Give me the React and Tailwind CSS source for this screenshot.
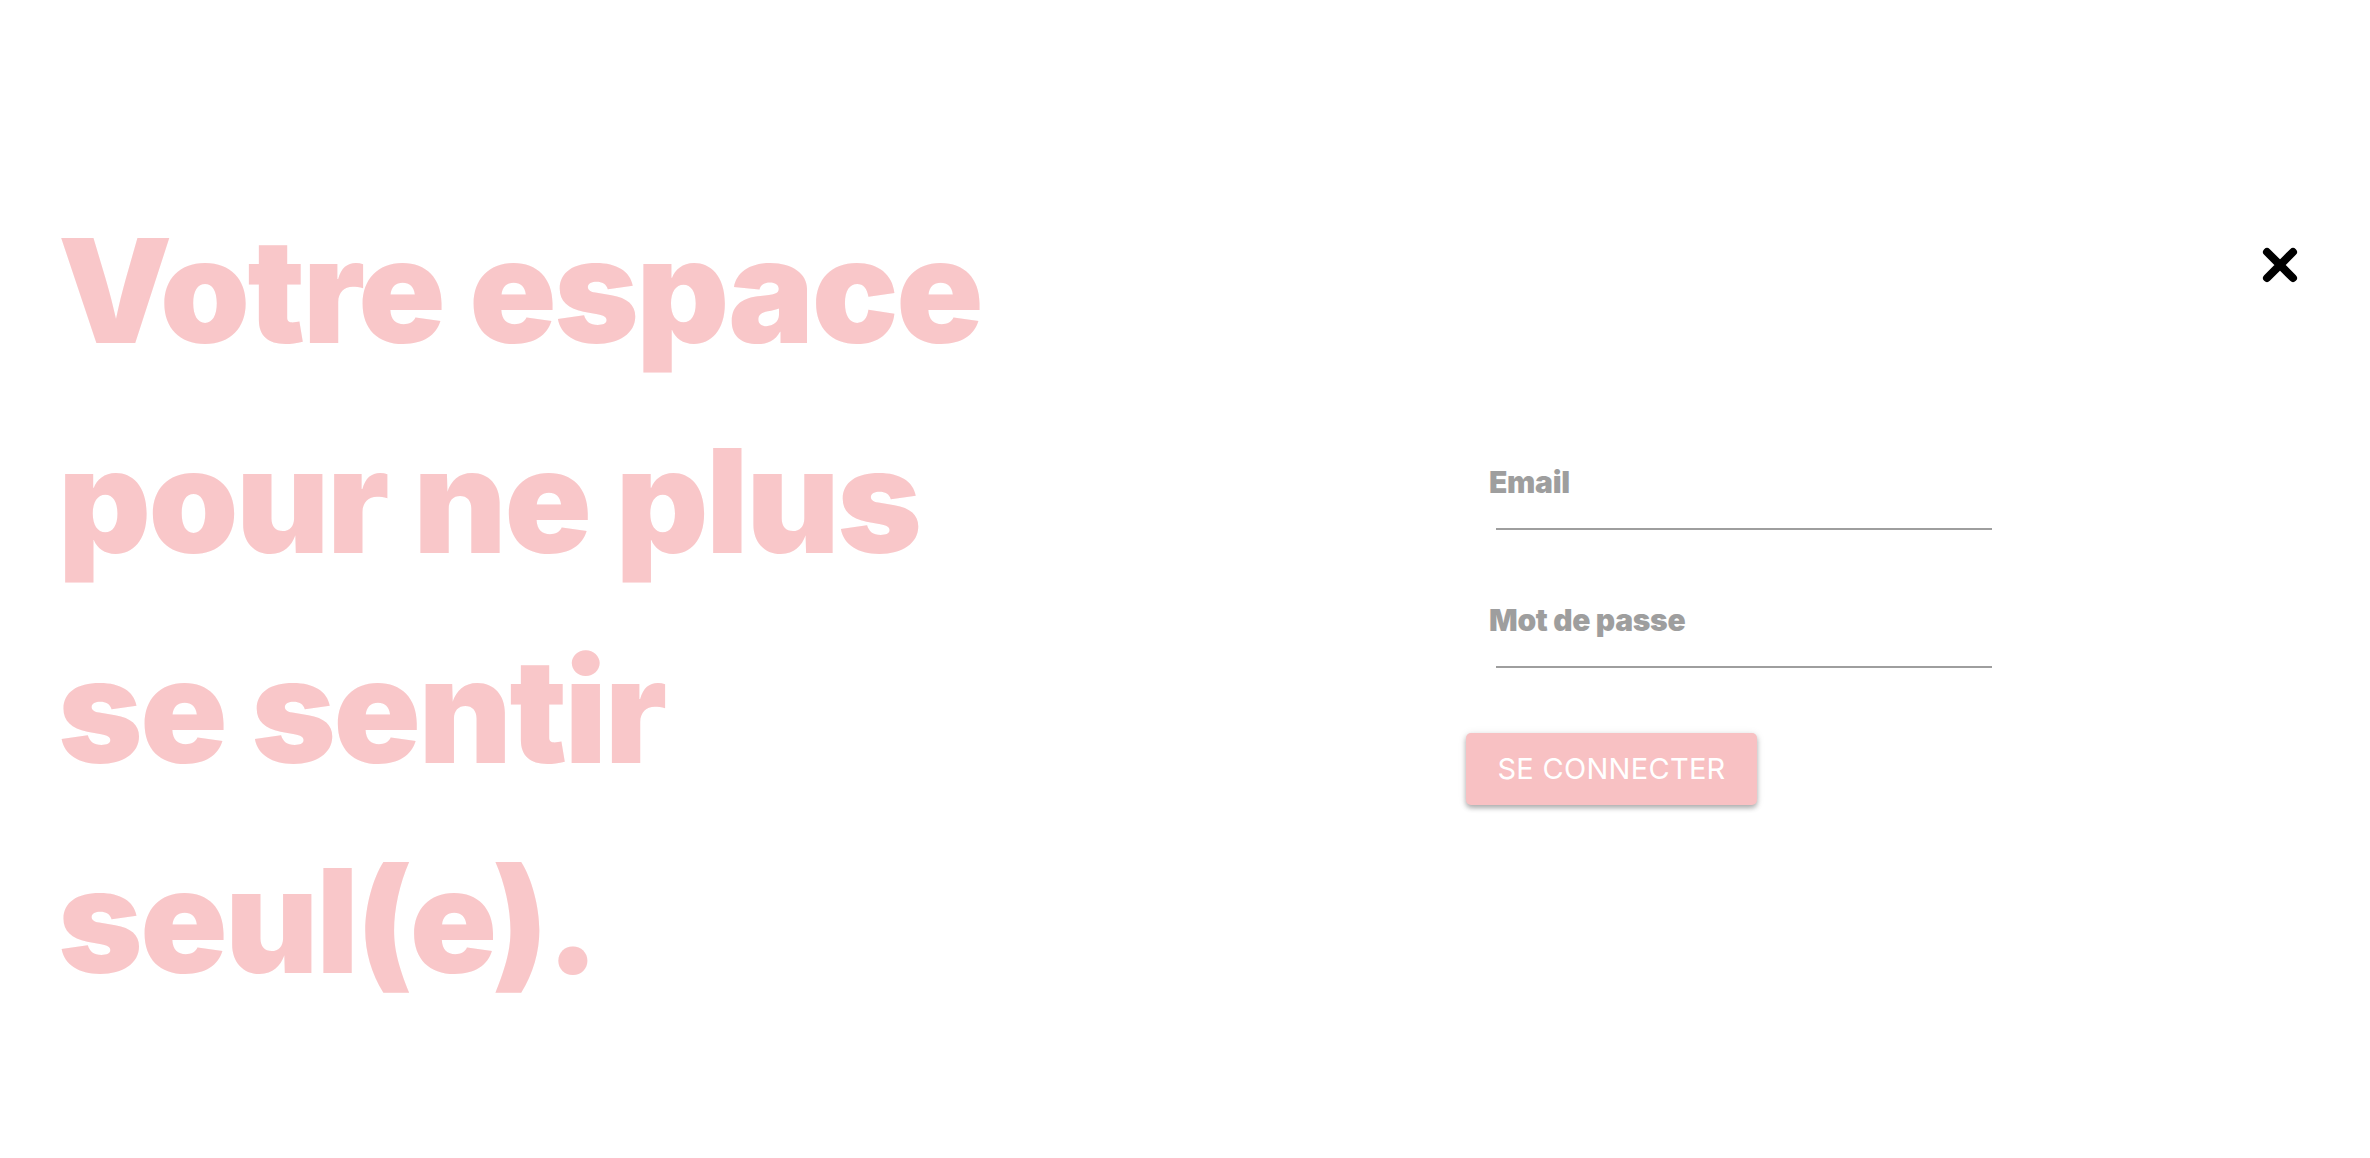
import React from "react";

function CloseIcon() {
  return (
    <svg width="36" height="36" viewBox="0 0 36 36" aria-hidden="true">
      <path d="M5 5 L31 31 M31 5 L5 31" stroke="#000" strokeWidth="8" strokeLinecap="round" fill="none" />
    </svg>
  );
}

function Field({ label, type }) {
  return (
    <div className="flex flex-col">
      <label className="text-[30px] leading-[36px] font-black text-[#9e9e9e] tracking-[-0.01em]">{label}</label>
      <input
        type={type}
        aria-label={label}
        className="mt-[28px] ml-[7px] w-[496px] h-[2px] bg-[#9e9e9e] outline-none border-0 p-0"
      />
    </div>
  );
}

export default function App() {
  return (
    <div className="relative min-h-[1158px] w-full bg-white" style={{ fontFamily: "Inter, 'Noto Sans', sans-serif" }}>
      <button className="absolute top-[247px] right-[72px] w-[36px] h-[36px] flex items-center justify-center" aria-label="Fermer">
        <CloseIcon />
      </button>
      <div className="flex items-start pl-[58px] pt-[186px]">
        <h1 className="w-[1408px] shrink-0 text-[144px] leading-[210px] font-black text-[#f9c7c9] tracking-[-0.017em]">
          Votre espace<br />pour ne plus<br />se sentir<br />seul(e).
        </h1>
        <form className="flex flex-col pt-[278px]">
          <div className="pl-[23px] flex flex-col gap-[72px]">
            <Field label="Email" type="email" />
            <Field label="Mot de passe" type="password" />
          </div>
          <button
            type="button"
            className="mt-[65px] w-[291px] h-[72px] rounded-[5px] bg-[#f8c1c3] text-white text-[29px] font-normal tracking-[0.01em] shadow-[0_3px_5px_rgba(0,0,0,0.28),0_1px_8px_rgba(0,0,0,0.1)]"
          >
            SE CONNECTER
          </button>
        </form>
      </div>
    </div>
  );
}
